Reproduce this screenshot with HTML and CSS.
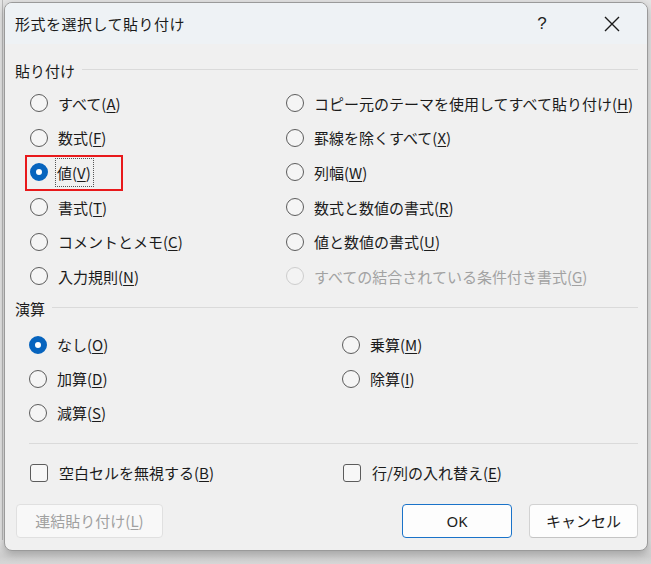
FILE: index.html
```html
<!DOCTYPE html>
<html lang="ja">
<head>
<meta charset="utf-8">
<link rel="stylesheet" href="styles.css">
</head>
<body>
<div class="backdrop">
  <div class="sheet-line"></div>
  <div class="dialog">
    <div class="titlebar">
      <div class="title">形式を選択して貼り付け</div>
      <div class="help">?</div>
      <div class="close">
        <svg width="16" height="16" viewBox="0 0 16 16"><path d="M1 1 L15 15 M15 1 L1 15" stroke="#1a1a1a" stroke-width="1.4" fill="none"/></svg>
      </div>
    </div>
    <div class="body">
      <div class="section-head first"><span>貼り付け</span><div class="rule"></div></div>
      <div class="grid paste">
        <div class="opt"><span class="radio"></span><span>すべて(<u>A</u>)</span></div>
        <div class="opt"><span class="radio"></span><span>コピー元のテーマを使用してすべて貼り付け(<u>H</u>)</span></div>
        <div class="opt"><span class="radio"></span><span>数式(<u>F</u>)</span></div>
        <div class="opt"><span class="radio"></span><span>罫線を除くすべて(<u>X</u>)</span></div>
        <div class="opt"><span class="radio on"></span><span class="focus">値(<u>V</u>)</span></div>
        <div class="opt"><span class="radio"></span><span>列幅(<u>W</u>)</span></div>
        <div class="opt"><span class="radio"></span><span>書式(<u>T</u>)</span></div>
        <div class="opt"><span class="radio"></span><span>数式と数値の書式(<u>R</u>)</span></div>
        <div class="opt"><span class="radio"></span><span>コメントとメモ(<u>C</u>)</span></div>
        <div class="opt"><span class="radio"></span><span>値と数値の書式(<u>U</u>)</span></div>
        <div class="opt"><span class="radio"></span><span>入力規則(<u>N</u>)</span></div>
        <div class="opt disabled"><span class="radio"></span><span>すべての結合されている条件付き書式(<u>G</u>)</span></div>
      </div>
      <div class="section-head second"><span>演算</span><div class="rule"></div></div>
      <div class="grid ops">
        <div class="opt"><span class="radio on"></span><span>なし(<u>O</u>)</span></div>
        <div class="opt"><span class="radio"></span><span>乗算(<u>M</u>)</span></div>
        <div class="opt"><span class="radio"></span><span>加算(<u>D</u>)</span></div>
        <div class="opt"><span class="radio"></span><span>除算(<u>I</u>)</span></div>
        <div class="opt"><span class="radio"></span><span>減算(<u>S</u>)</span></div>
      </div>
      <div class="sep"></div>
      <div class="grid checks">
        <div class="opt"><span class="check"></span><span>空白セルを無視する(<u>B</u>)</span></div>
        <div class="opt"><span class="check"></span><span>行/列の入れ替え(<u>E</u>)</span></div>
      </div>
      <div class="buttons">
        <button class="btn link" disabled>連結貼り付け(<u>L</u>)</button>
        <div class="spacer"></div>
        <button class="btn ok">OK</button>
        <button class="btn cancel">キャンセル</button>
      </div>
    </div>
    <div class="redbox"></div>
  </div>
</div>
</body>
</html>
```

FILE: styles.css
```css
html, body {
  margin: 0;
  padding: 0;
}
body {
  font-family: "Noto Sans CJK JP", "Noto Sans", sans-serif;
  color: #1b1b1b;
}
.backdrop {
  position: relative;
  width: 651px;
  height: 564px;
  background: linear-gradient(#e4e4e4, #e4e4e4 540px, #cfcfcf 556px, #d6d6d6);
  overflow: hidden;
  padding-top: 2px;
  box-sizing: border-box;
}
.sheet-line {
  position: absolute;
  left: 2px;
  top: 0;
  width: 1px;
  height: 540px;
  background: #b9b9b9;
}
.dialog {
  position: relative;
  margin-left: 4px;
  width: 644px;
  height: 549px;
  box-sizing: border-box;
  background: #f0f0f0;
  border: 1px solid #9a9a9a;
  border-radius: 8px;
  box-shadow: 0 3px 8px rgba(0,0,0,0.25);
  overflow: hidden;
}
.titlebar {
  height: 41px;
  background: #eef2f5;
  display: flex;
  align-items: center;
}
.title {
  font-size: 15px;
  margin-left: 10px;
  flex: 1;
  letter-spacing: 0.5px;
}
.help {
  font-family: "Liberation Sans", sans-serif;
  font-size: 17px;
  width: 20px;
  text-align: center;
  margin-right: 52px;
  color: #222;
}
.close {
  width: 16px;
  height: 16px;
  margin-right: 27px;
  display: flex;
}
.body {
  padding: 0 9px 0 10px;
}
.section-head {
  display: flex;
  align-items: center;
  font-size: 15px;
  height: 22px;
}
.section-head.first { margin-top: 15px; }
.section-head.second { margin-top: 4px; }
.section-head .rule {
  flex: 1;
  height: 1px;
  background: #dadada;
  margin-left: 7px;
  margin-top: -2px;
}
.grid {
  display: grid;
  font-size: 15px;
}
.paste {
  grid-template-columns: 256px 1fr;
  grid-auto-rows: 34.6px;
  margin-top: 5px;
  padding-left: 15px;
}
.ops {
  grid-template-columns: 313px 1fr;
  grid-auto-rows: 34px;
  margin-top: 8px;
  padding-left: 14px;
}
.checks {
  grid-template-columns: 313px 1fr;
  grid-auto-rows: 34px;
  margin-top: 12px;
  padding-left: 15px;
}
.opt {
  display: flex;
  align-items: center;
  white-space: nowrap;
}
.opt u {
  text-underline-offset: 2px;
}
.radio {
  width: 18px;
  height: 18px;
  border: 1.3px solid #5c5c5c;
  border-radius: 50%;
  box-sizing: border-box;
  margin-right: 10px;
  background: #f5f5f5;
  flex: none;
}
.radio.on {
  border: 6px solid #0764be;
  background: #fff;
}
.disabled {
  color: #a2a2a2;
}
.disabled .radio {
  border-color: #cdcdcd;
  background: #f3f3f3;
}
.focus {
  outline: 1px dotted #555;
  outline-offset: 0;
  padding: 3px 2px 3px 1px;
  margin-left: -2px;
}
.check {
  width: 18px;
  height: 18px;
  border: 1.3px solid #5c5c5c;
  border-radius: 3px;
  box-sizing: border-box;
  margin-right: 11px;
  background: #f7f7f7;
  flex: none;
}
.sep {
  height: 1px;
  background: #dadada;
  margin: 13px 0 0 14px;
}
.buttons {
  display: flex;
  margin-top: 14px;
  padding-left: 1px;
}
.spacer { flex: 1; }
.btn {
  font-family: "Noto Sans CJK JP", "Noto Sans", sans-serif;
  font-size: 15px;
  height: 34px;
  border-radius: 4px;
  background: #fdfdfd;
  border: 1px solid #d2d2d2;
  border-bottom-color: #c4c4c4;
  color: #1b1b1b;
  padding: 0;
}
.btn u { text-underline-offset: 2px; }
.link {
  width: 147px;
  color: #a0a0a0;
  background: #f8f8f8;
  border-color: #e0e0e0;
}
.ok {
  width: 110px;
  border: 1px solid #1a73c9;
  margin-right: 17px;
  font-family: "Noto Sans", sans-serif;
}
.cancel {
  width: 109px;
}
.redbox {
  position: absolute;
  left: 20px;
  top: 152px;
  width: 98px;
  height: 36px;
  border: 2px solid #e8191b;
  box-sizing: border-box;
}
```
